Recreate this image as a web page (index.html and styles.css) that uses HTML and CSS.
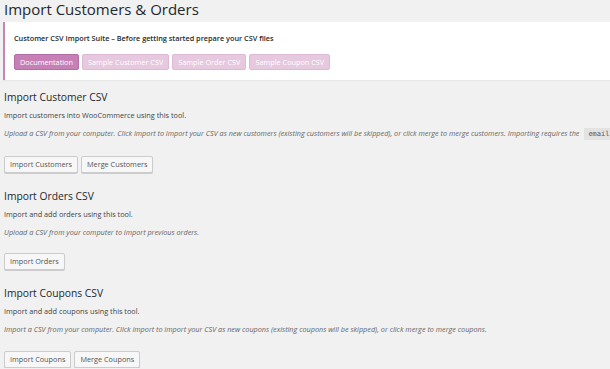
FILE: index.html
```html
<!DOCTYPE html>
<html lang="en">
<head>
    <meta charset="UTF-8">
    <meta name="viewport" content="width=device-width, initial-scale=1.0">
    <title>Import Customers &amp; Orders</title>
    <link rel="stylesheet" href="styles.css">
</head>
<body>
    <div class="wrap">
        <h1>Import Customers &amp; Orders</h1>

        <div class="notice">
            <p class="notice-title">Customer CSV Import Suite &ndash; Before getting started prepare your CSV files</p>
            <div class="notice-links">
                <a class="btn-woo primary" href="#">Documentation</a>
                <a class="btn-woo" href="#">Sample Customer CSV</a>
                <a class="btn-woo" href="#">Sample Order CSV</a>
                <a class="btn-woo" href="#">Sample Coupon CSV</a>
            </div>
        </div>

        <!-- customers -->
        <div class="section">
            <h2>Import Customer CSV</h2>
            <p>Import customers into WooCommerce using this tool.</p>
            <p class="description">Upload a CSV from your computer. Click import to import your CSV as new customers (existing customers will be skipped), or click merge to merge customers. Importing requires the <code>email</code></p>
            <div class="actions">
                <button class="button">Import Customers</button>
                <button class="button">Merge Customers</button>
            </div>
        </div>

        <!-- orders -->
        <div class="section">
            <h2>Import Orders CSV</h2>
            <p>Import and add orders using this tool.</p>
            <p class="description">Upload a CSV from your computer to import previous orders.</p>
            <div class="actions">
                <button class="button">Import Orders</button>
            </div>
        </div>

        <!-- coupons -->
        <div class="section">
            <h2>Import Coupons CSV</h2>
            <p>Import and add coupons using this tool.</p>
            <p class="description">Import a CSV from your computer. Click import to import your CSV as new coupons (existing coupons will be skipped), or click merge to merge coupons.</p>
            <div class="actions">
                <button class="button">Import Coupons</button>
                <button class="button">Merge Coupons</button>
            </div>
        </div>
    </div>
</body>
</html>
```

FILE: styles.css
```css
body {
    font-family: 'Open Sans', sans-serif;
    margin: 0;
    padding: 0;
    background-color: #f1f1f1;
    color: #444;
    overflow: hidden;
}

.wrap {
    padding-left: 4px;
    white-space: nowrap;
}

h1 {
    font-size: 15px;
    line-height: 18px;
    font-weight: 400;
    color: #23282d;
    margin: 0;
}

.notice {
    margin: 4px 0 0 -1px;
    background-color: #fff;
    border-left: 2px solid #c785b7;
    box-shadow: 0 1px 1px rgba(0, 0, 0, 0.04);
    padding: 10px 10px 10px 9px;
}

.notice-title {
    font-size: 7.3px;
    line-height: 12px;
    font-weight: 600;
    color: #23282d;
    margin: 0;
}

.notice-links {
    display: flex;
    gap: 3px;
    margin-top: 10px;
}

.btn-woo {
    display: inline-block;
    height: 16px;
    line-height: 14px;
    padding: 0 5px;
    font-size: 7.3px;
    color: #fff;
    text-decoration: none;
    background-color: #e6c8df;
    border: 1px solid #dcbad5;
    border-radius: 2px;
    box-sizing: border-box;
}

.btn-woo.primary {
    background-color: #c680b6;
    border-color: #b56ea5;
}

.section {
    margin-top: 10px;
}

.section + .section {
    margin-top: 16px;
}

h2 {
    font-size: 10.3px;
    line-height: 14px;
    font-weight: 400;
    color: #23282d;
    margin: 0;
}

p {
    font-size: 7.3px;
    line-height: 12px;
    margin: 5px 0 0;
}

p.description {
    font-size: 7.25px;
    font-style: italic;
    color: #666;
    margin-top: 6px;
}

code {
    font-family: 'DejaVu Sans Mono', monospace;
    font-style: normal;
    font-size: 7px;
    color: #555;
    background-color: #e3e3e3;
    padding: 2px 4px;
    margin-left: 3px;
}

.actions {
    display: flex;
    gap: 3px;
    margin-top: 15.5px;
}

.button {
    font-family: 'Open Sans', sans-serif;
    font-size: 7.3px;
    height: 17px;
    line-height: 15px;
    padding: 0 5px;
    color: #555;
    background-color: #f7f7f7;
    border: 1px solid #ccc;
    border-radius: 2px;
    box-shadow: 0 1px 0 #ccc;
    box-sizing: border-box;
    cursor: pointer;
}
```
